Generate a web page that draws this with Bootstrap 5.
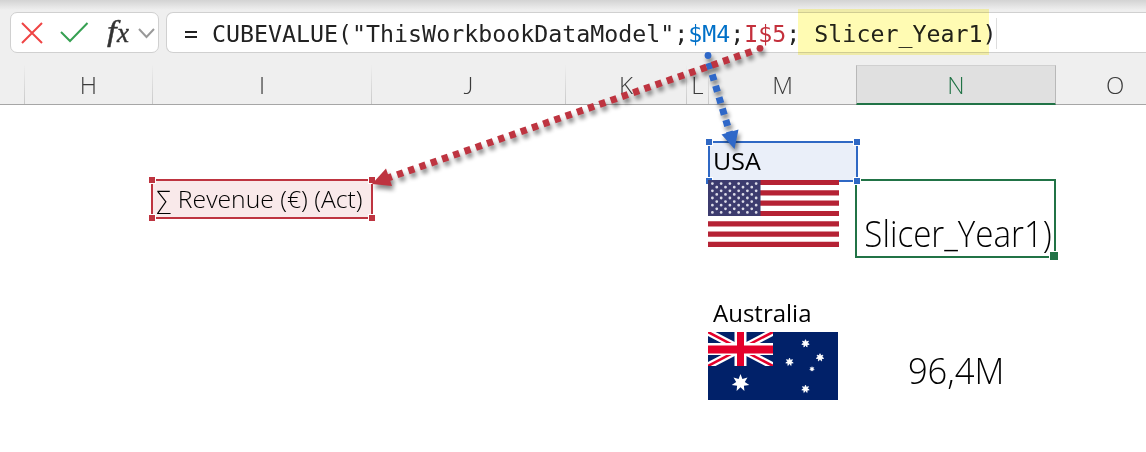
<!DOCTYPE html>
<html lang="en">
<head>
<meta charset="utf-8">
<title>Workbook</title>
<link href="https://cdn.jsdelivr.net/npm/bootstrap@5.3.0/dist/css/bootstrap.min.css" rel="stylesheet">
<style>
body{width:1146px;height:452px;font-family:"Open Sans","Noto Sans",sans-serif;color:#000;background:#fff}
.ribbon{height:65px;padding:12px 0 0 10px;gap:7px;background:linear-gradient(#d3d3d3,#efefef 10px)}
.tools{width:149px;height:41px;border:1px solid #d0d0d0;border-radius:7px}
.formula{height:41px;border:1px solid #d0d0d0;border-right:0;border-radius:7px 0 0 7px;padding-left:17px;font:23.27px/41px "DejaVu Sans Mono",monospace;color:#222;white-space:pre}
.hl{position:absolute;left:798px;top:9px;width:191px;height:46px;background:#fffbb3;mix-blend-mode:multiply}
.caret{position:absolute;left:996px;top:18px;width:1px;height:31px;background:#ddd}
.cols{display:grid;grid-template-columns:25px 128px 219px 194px 121px 22px 148px 199px 1fr}
.heads{height:40px;background:#efefef;border-bottom:1px solid #a6a6a6;font-weight:300;font-size:24px;line-height:39px;text-align:center;color:#3b3b3b}
.heads>div{border-right:1px solid;border-image:linear-gradient(#efefef,#c8c8c8) 1;height:39px}
.heads>div:last-child{border:0}
.heads>.active-col{height:40px;background:#e0e0e0;color:#217346;border-image:none;border:1px solid #b8b8b8;border-top-color:#d0d0d0;border-bottom:2px solid #217346;margin-left:-1px;line-height:37px}
.hook{font-family:Lato,sans-serif;font-size:24px}
.cells{height:347px;grid-template-rows:37px 38px 78px 37px 37px 78px}
.c-i{grid-column:3}.c-m{grid-column:7;margin-left:-1px}.c-n{grid-column:8}
.r2{grid-row:2}.r3{grid-row:3}.r5{grid-row:5}.r6{grid-row:6}
.cell-text{font-size:24px;line-height:35px;white-space:nowrap}
.ref{position:relative;border:2px solid}
.ref i{position:absolute;width:7px;height:7px;border:1px solid #fff;background:currentColor}
.ref i:nth-of-type(1){left:-5px;top:-5px}.ref i:nth-of-type(2){right:-5px;top:-5px}
.ref i:nth-of-type(3){left:-5px;bottom:-5px}.ref i:nth-of-type(4){right:-5px;bottom:-5px}
.red{color:#be3440;background:#f9e9ea;height:40px;width:222px;margin-left:-2px;margin-top:-1px}
.blue{color:#2f68c4;background:#eaeff9;height:41px;width:150px;margin-top:-1px;z-index:2}
.flag{position:relative;z-index:3}
.green{position:relative;border:2px solid #217346;width:201px;height:79px;margin:-1px 0 0 -2px}
.green b{position:absolute;right:-4px;bottom:-4px;width:9px;height:9px;background:#217346;border:1px solid #fff;border-right:0;border-bottom:0}
.ref i{width:8px;height:8px}
.big{font-size:36px;font-weight:300;line-height:44px;white-space:nowrap}
.fit{display:inline-block;transform-origin:0 50%}
.arrows{position:absolute;left:0;top:0;z-index:5;filter:drop-shadow(2px 4px 2px #0007)}
</style>
</head>
<body class="position-relative overflow-hidden">
<header class="ribbon d-flex">
  <div class="tools bg-white flex-shrink-0">
    <svg class="d-block" width="147" height="39" viewBox="11 13 147 39" fill="none" stroke-width="2">
      <path d="M22 23 42 43M42 23 22 43" stroke="#ef4444"/>
      <path d="M61 32 70 41 87.500 23" stroke="#36a052"/>
      <path d="M139 29 146.500 37 154 29" stroke="#999"/>
      <text transform="translate(107 41) scale(1.15 1)" font-family="Liberation Serif" font-style="italic" font-size="30" fill="#333" stroke="#333" stroke-width=".4">f</text>
      <text x="117" y="41.500" font-family="Liberation Serif" font-style="italic" font-size="27" fill="#333" stroke="#333" stroke-width=".4">x</text>
    </svg>
  </div>
  <div class="formula bg-white flex-grow-1">= CUBEVALUE("ThisWorkbookDataModel";<span style="color:#0070c8">$M4</span>;<span style="color:#c4303c">I$5</span>; Slicer_Year1)</div>
  <div class="hl"></div><div class="caret"></div>
</header>
<div class="cols heads">
  <div></div><div>H</div><div>I</div><div class="hook">J</div><div>K</div><div>L</div><div>M</div><div class="active-col">N</div><div class="text-start ps-5"><span class="ms-1 d-inline-block" style="margin-right:0;transform:translateX(-2px)">O</span></div>
</div>
<main class="cols cells">
  <div class="ref red c-i r3"><span class="cell-text text-black fit" style="font-weight:300;padding-left:3px;transform:scaleX(1.03)">∑ Revenue (€) (Act)</span><i></i><i></i><i></i><i></i></div>
  <div class="ref blue c-m r2"><span class="cell-text text-black fit" style="padding-left:3px;transform:scaleX(1.04)">USA</span><i></i><i></i><i></i><i></i></div>
  <div class="c-m r3 flag">
    <svg class="d-block" width="131" height="67" viewBox="0 0 131 67">
      <rect width="131" height="67" fill="#fff"/>
      <path d="M0 2.500H131M0 12.900H131M0 23.200H131M0 33.500H131M0 43.800H131M0 54.100H131M0 64.400H131" stroke="#b52234" stroke-width="5.200"/>
      <rect width="52.500" height="36" fill="#3c3b6e"/>
      <path d="M4.400 3.600H52M4.400 10.800H52M4.400 18H52M4.400 25.200H52M4.400 32.400H52" stroke="#dcdce8" stroke-width="2.800" stroke-linecap="round" stroke-dasharray="0 8.750"/>
      <path d="M8.750 7.200H48M8.750 14.400H48M8.750 21.600H48M8.750 28.800H48" stroke="#dcdce8" stroke-width="2.800" stroke-linecap="round" stroke-dasharray="0 8.750"/>
    </svg>
  </div>
  <div class="green c-n r3 d-flex align-items-end"><span class="big fit" style="padding-left:8px;transform:scaleX(.92)">Slicer_Year1)</span><b></b></div>
  <div class="c-m r5"><span class="cell-text fit" style="padding-left:5px">Australia</span></div>
  <div class="c-m r6">
    <svg class="d-block" width="130" height="68" viewBox="0 0 130 68">
      <defs><clipPath id="jack"><path d="M0 0H65V34H0z"/></clipPath>
      <path id="star" d="M0-9 1.900-3.900 7-5.600 4.300-1 8.800 2 3.400 2.700 3.900 8.100 0 4.300-3.900 8.100-3.400 2.700-8.800 2-4.300-1-7-5.600-1.900-3.900z" fill="#fff"/></defs>
      <rect width="130" height="68" fill="#012169"/>
      <g clip-path="url(#jack)"><path d="M0 0 65 34M65 0 0 34" stroke="#fff" stroke-width="7"/><path d="M0 0 65 34M65 0 0 34" stroke="#e4002b" stroke-width="2.500"/><path d="M32.500 0V34M0 17H65" stroke="#fff" stroke-width="12"/><path d="M32.500 0V34" stroke="#e4002b" stroke-width="7"/><path d="M0 17.500H65" stroke="#e4002b" stroke-width="8"/></g>
      <use href="#star" x="32.500" y="51"/>
      <g fill="#fff" stroke="#fff" stroke-width="2"><use href="#star" transform="translate(97.500 11.500) scale(.42)"/><use href="#star" transform="translate(81.500 30) scale(.42)"/><use href="#star" transform="translate(112 25.500) scale(.42)"/><use href="#star" transform="translate(104 37) scale(.26)"/><use href="#star" transform="translate(97.500 57) scale(.42)"/></g>
    </svg>
  </div>
  <div class="c-n r6"><span class="big fit" style="padding-left:53px;padding-top:17px;transform:scaleX(.96)">96,4M</span></div>
</main>
<svg class="arrows" width="1146" height="452">
  <g fill="none" stroke-width="7" stroke-dasharray="6.300 5.600">
    <path d="M708.800 63 730 134" stroke="#2f68c8"/>
    <path d="M751.500 51.500 388 178" stroke="#be3440"/>
  </g>
  <circle cx="708" cy="55.500" r="3.400" fill="#2f68c8"/><circle cx="760" cy="48.300" r="3.400" fill="#be3440"/>
  <path d="M721.500 134.500 738.500 129.500 734.500 149z" fill="#2f68c8"/>
  <path d="M372 184 386 168.500 392 186z" fill="#be3440"/>
</svg>
<script src="https://cdn.jsdelivr.net/npm/bootstrap@5.3.0/dist/js/bootstrap.bundle.min.js"></script>
</body>
</html>
